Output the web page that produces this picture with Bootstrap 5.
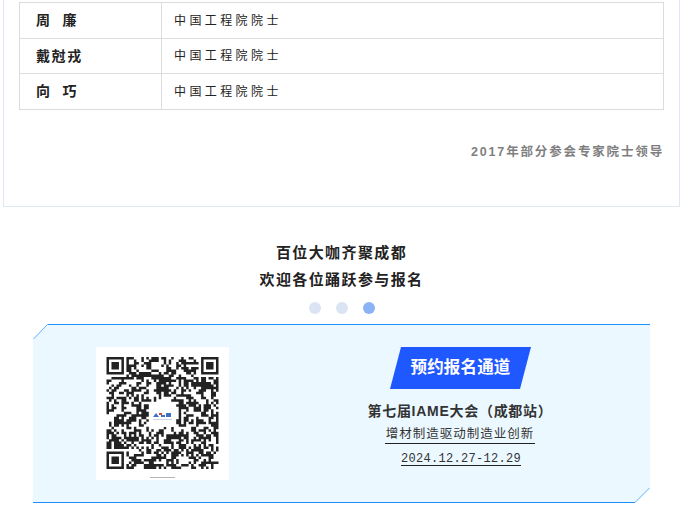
<!doctype html>
<html lang="zh">
<head>
<meta charset="utf-8">
<link href="https://cdn.jsdelivr.net/npm/bootstrap@5.3.0/dist/css/bootstrap.min.css" rel="stylesheet">
<style>
html,body{height:516px;overflow:hidden;background:#fff}
body{font-family:"Liberation Sans","Noto Sans CJK SC",sans-serif;color:#222}
.sheet{margin:0 3px;height:207px;border:1px solid #dfe7f3;border-top:0;padding:2px 15px 0}
.peers{width:645px;margin:0;table-layout:fixed;--bs-table-border-color:#dcdcdc}
.peers td{padding:0;vertical-align:middle;border-color:#dcdcdc;border-width:1px}
.peers .rowa{height:36px}.peers .rowb{height:35px}
.peers .who{width:142px;padding-left:16px;font-size:14px;font-weight:700;letter-spacing:1.6px;color:#222;white-space:pre}
.peers .what{padding-left:12px;font-size:12px;letter-spacing:3.4px;color:#222}
.capnote{margin-top:33px;font-size:12.5px;font-weight:700;letter-spacing:1.85px;color:#7f7f7f;line-height:18px}
.invite{margin-top:32px;font-size:15px;font-weight:700;letter-spacing:1.4px;line-height:27px;color:#222}
.dotrow{margin-top:9px;gap:15px}
.pip{width:12px;height:12px;border-radius:50%;background:#dbe4f3}
.pip-on{background:#8ab3f5}
.panel{position:relative;margin:10px 0 0 33px;width:617px;height:179px;padding-top:23px}
.panel-bg{position:absolute;inset:0;width:617px;height:179px}
.qrbox{position:relative;width:133px;height:133px;margin-left:63px;background:#fff}
.qrbox svg{display:block}
.signup{position:relative;margin-left:42px;flex:1}
.flag{width:141px;height:42px;background:#2058ff;clip-path:polygon(11px 0,100% 0,130px 100%,0 100%);color:#fff;font-size:16.5px;font-weight:700;line-height:41px;text-align:center;letter-spacing:.15px}
.confname{margin-top:13px;font-size:14px;font-weight:700;line-height:18px;color:#333;letter-spacing:.72px;margin-left:-1px}
.theme{margin-top:6px;font-size:12.5px;line-height:17px;letter-spacing:.98px;color:#333;border-bottom:1px solid #222;padding:0 1px;margin-left:-1px}
.dates{margin-top:9px;font-family:"Liberation Mono",monospace;font-size:12px;line-height:12px;letter-spacing:.3px;color:#333;border-bottom:1px solid #222;padding:0;margin-left:1px}
</style>
</head>
<body>
<div class="sheet">
  <table class="table table-bordered peers">
    <tbody>
      <tr class="rowa"><td class="who">周  廉</td><td class="what">中国工程院院士</td></tr>
      <tr class="rowb"><td class="who">戴尅戎</td><td class="what">中国工程院院士</td></tr>
      <tr class="rowa"><td class="who">向  巧</td><td class="what">中国工程院院士</td></tr>
    </tbody>
  </table>
  <div class="capnote text-end">2017年部分参会专家院士领导</div>
</div>
<div class="invite text-center">百位大咖齐聚成都<br>欢迎各位踊跃参与报名</div>
<div class="d-flex justify-content-center dotrow">
  <span class="pip"></span><span class="pip"></span><span class="pip pip-on"></span>
</div>
<div class="panel d-flex">
  <svg class="panel-bg" viewBox="0 0 617 179" aria-hidden="true">
    <polygon points="14.5,0 617,0 617,164 602,179 0,179 0,15" fill="#ebf8ff"/>
    <path d="M14.5 .5H617" stroke="#1e90ff" fill="none"/>
    <path d="M0 178.5H602" stroke="#1e90ff" fill="none"/>
    <path d="M.5 15L14.5 .5M602 178.5L616.5 164" stroke="#5cb2ff" fill="none"/>
  </svg>
  <div class="qrbox">
    <svg id="qrcode" width="133" height="133" viewBox="0 0 133 133" aria-hidden="true"></svg>
  </div>
  <div class="signup d-flex flex-column align-items-center">
    <div class="flag">预约报名通道</div>
    <div class="confname">第七届IAME大会（成都站）</div>
    <div class="theme">增材制造驱动制造业创新</div>
    <div class="dates">2024.12.27-12.29</div>
  </div>
</div>
<script>
(function(){
  var n=45,u=112/45,ox=10.5,oy=10,d='',seed=73421;
  function rnd(){seed=(seed*1103515245+12345)&0x7fffffff;return (seed>>>8)%100;}
  function finder(x,y){return x>=0&&y>=0&&x<7&&y<7&&(x==0||y==0||x==6||y==6||(x>1&&x<5&&y>1&&y<5));}
  var prev=[];
  for(var y=0;y<n;y++){for(var x=0;x<n;x++){
    var on;
    var inF=(x<8&&y<8)||(x>=n-8&&y<8)||(x<8&&y>=n-8);
    if(inF){on=finder(x,y)||finder(x-(n-7),y)||finder(x,y-(n-7));}
    else if(x>=17&&x<28&&y>=18&&y<28){on=false;}
    else{var p=prev[x]?56:46;on=rnd()<p;}
    prev[x]=on;
    if(on)d+='M'+(ox+x*u).toFixed(2)+' '+(oy+y*u).toFixed(2)+'h'+u.toFixed(2)+'v'+u.toFixed(2)+'h-'+u.toFixed(2)+'z';
  }}
  var s='<path d="'+d+'" fill="#222"/>'+
    '<rect x="54" y="55" width="25" height="25" rx="3" fill="#fff"/>'+
    '<path d="M57 70l3-4 3 4zM65 68h4v2h-4zM70 66h5v4h-5z" fill="#3f6fc4"/>'+
    '<path d="M63 66h3v2h-3z" fill="#d0484c"/>'+
    '<path d="M57 72h19v1H57z" fill="#c9d6ea"/>'+
    '<rect x="54" y="130" width="25" height="1" fill="#b5b5b5"/>';
  document.getElementById('qrcode').innerHTML=s;
})();
</script>
</body>
</html>
